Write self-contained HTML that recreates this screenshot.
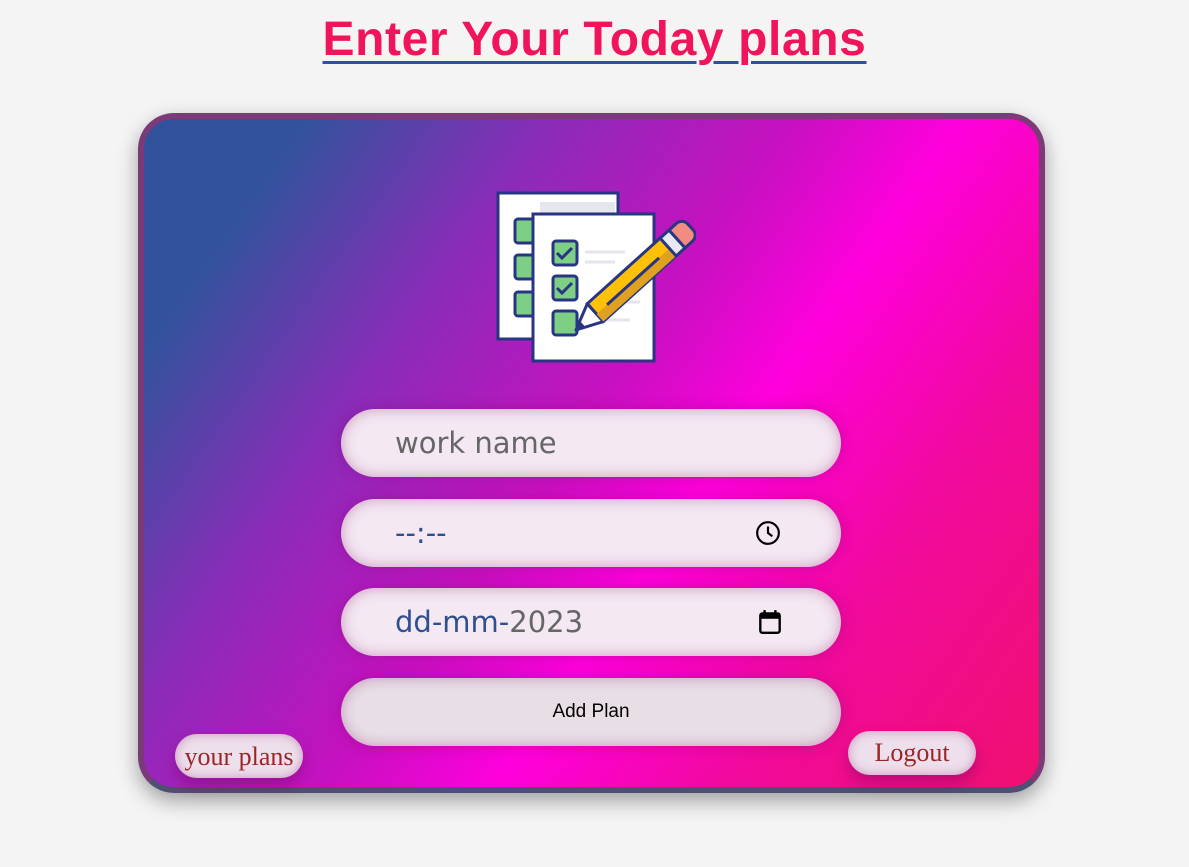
<!DOCTYPE html>
<html><head><meta charset="utf-8"><style>
html,body{margin:0;padding:0;background:#f4f4f4;width:1189px;height:867px;overflow:hidden;font-family:"Liberation Sans",sans-serif}
h1{position:absolute;left:0;width:1189px;top:12px;margin:0;text-align:center;font-size:48px;font-weight:bold;color:#f0145a;text-decoration:underline;text-decoration-color:#2f4f9f;text-decoration-thickness:3px;text-underline-offset:6px;letter-spacing:0.6px}
.card{position:absolute;left:138px;top:113px;width:895px;height:668px;border:6px solid #7d3a78;border-bottom-color:#4e4f72;border-left-color:#7a3a7a;border-radius:36px;
background:linear-gradient(125deg,#2f539b 0%,#32539c 12%,#8a2cb8 30%,#c810c0 48%,#ff00dd 60%,#f00a9a 78%,#f01070 100%);box-shadow:0 8px 20px rgba(0,0,0,.35)}
.inp{position:absolute;left:197px;width:500px;height:68px;border-radius:34px;background:#f4e8f2;box-shadow:inset 0 0 14px rgba(150,60,130,.45),0 0 14px rgba(120,0,100,.3);box-sizing:border-box;padding-left:54px;line-height:68px;font-family:"DejaVu Sans",sans-serif;font-size:29px;color:#666}
.btn{position:absolute;border-radius:24px;background:#eedfec;box-shadow:inset 0 0 10px rgba(150,60,130,.45),0 8px 14px rgba(120,0,100,.4);font-family:"Liberation Serif",serif;font-size:26px;color:#9a2626;text-align:center}
</style></head><body>
<h1>Enter Your Today plans</h1>
<div class="card">
<svg style="position:absolute;left:352px;top:70px" width="200" height="176" viewBox="496 187 200 176">
 <rect x="498" y="191" width="120" height="146" fill="#fff" stroke="#283583" stroke-width="3"/>
 <rect x="540" y="200" width="75" height="130" fill="#e6e6ee"/>
 <rect x="515" y="217" width="20" height="24" rx="3" fill="#7dcf85" stroke="#283583" stroke-width="3"/>
 <rect x="515" y="253" width="20" height="24" rx="3" fill="#7dcf85" stroke="#283583" stroke-width="3"/>
 <rect x="515" y="290" width="20" height="24" rx="3" fill="#7dcf85" stroke="#283583" stroke-width="3"/>
 <rect x="533" y="212" width="121" height="147" fill="#fff" stroke="#283583" stroke-width="3"/>
 <path d="M585 250l40 0M585 260l30 0M590 300l50 0M590 318l40 0" stroke="#e4e4ec" stroke-width="3"/>
 <rect x="553" y="239" width="24" height="24" rx="3" fill="#7dcf85" stroke="#283583" stroke-width="3"/>
 <path d="M557 251l5 5 10-10" fill="none" stroke="#283583" stroke-width="3"/>
 <rect x="553" y="274" width="24" height="24" rx="3" fill="#7dcf85" stroke="#283583" stroke-width="3"/>
 <path d="M557 286l5 5 10-10" fill="none" stroke="#283583" stroke-width="3"/>
 <rect x="553" y="309" width="24" height="24" rx="3" fill="#7dcf85" stroke="#283583" stroke-width="3"/>
 <g transform="translate(576 328) rotate(-42)">
  <path d="M0 0L26 -12L26 12Z" fill="#fff" stroke="#283583" stroke-width="3" stroke-linejoin="round"/>
  <path d="M0 0L9 -4L9 4Z" fill="#283583"/>
  <rect x="26" y="-12" width="98" height="24" fill="#ffc107" stroke="#283583" stroke-width="3"/>
  <rect x="26" y="2" width="98" height="10" fill="#e0a020"/>
  <path d="M40 2L110 2" stroke="#283583" stroke-width="3"/>
  <rect x="124" y="-12" width="12" height="24" fill="#e8e8f0" stroke="#283583" stroke-width="3"/>
  <path d="M136 -12H146a8 8 0 0 1 8 8V4a8 8 0 0 1 -8 8H136Z" fill="#f28b82" stroke="#283583" stroke-width="3"/>
 </g>
</svg>
<div class="inp" style="top:290px">work name</div>
<div class="inp" style="top:380px;color:#2f4f8f">--:--
 <svg style="position:absolute;left:414px;top:21px" width="26" height="26" viewBox="0 0 24 24"><circle cx="12" cy="12" r="10" fill="none" stroke="#000" stroke-width="2"/><path d="M12 6v6l4 3" fill="none" stroke="#000" stroke-width="2"/></svg></div>
<div class="inp" style="top:469px"><span style="color:#2f4f8f">dd-mm-</span>2023
 <svg style="position:absolute;left:416px;top:20px" width="26" height="28" viewBox="0 0 24 26"><rect x="3" y="5" width="18" height="18" rx="2" fill="none" stroke="#000" stroke-width="2.2"/><rect x="3" y="5" width="18" height="5" fill="#000"/><path d="M7 2v5M17 2v5" stroke="#000" stroke-width="2.2"/></svg></div>
<div class="inp" style="top:559px;padding:0;text-align:center;font-family:'Liberation Sans',sans-serif;font-size:19px;color:#000;background:#e8dfe6">Add Plan</div>
<div class="btn" style="left:31px;top:615px;width:128px;height:44px;line-height:46px">your plans</div>
<div class="btn" style="left:704px;top:612px;width:128px;height:44px;line-height:44px">Logout</div>
</div>
</body></html>
